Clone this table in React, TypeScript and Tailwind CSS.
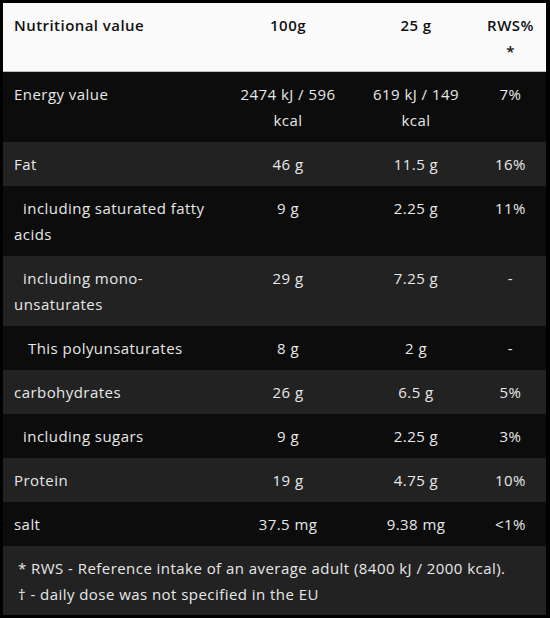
import React from "react";

type Row = { name: string; indent?: number; a: React.ReactNode; b: React.ReactNode; c: string; light: boolean };

const rows: Row[] = [
  { name: "Energy value", a: "2474 kJ / 596 kcal", b: "619 kJ / 149 kcal", c: "7%", light: false },
  { name: "Fat", a: "46 g", b: "11.5 g", c: "16%", light: true },
  { name: "including saturated fatty acids", indent: 9, a: "9 g", b: "2.25 g", c: "11%", light: false },
  { name: "including mono-unsaturates", indent: 9, a: "29 g", b: "7.25 g", c: "-", light: true },
  { name: "This polyunsaturates", indent: 14, a: "8 g", b: "2 g", c: "-", light: false },
  { name: "carbohydrates", a: "26 g", b: "6.5 g", c: "5%", light: true },
  { name: "including sugars", indent: 9, a: "9 g", b: "2.25 g", c: "3%", light: false },
  { name: "Protein", a: "19 g", b: "4.75 g", c: "10%", light: true },
  { name: "salt", a: "37.5 mg", b: "9.38 mg", c: "<1%", light: false },
];

export default function App() {
  return (
    <div
      className="w-[550px] h-[618px] bg-black pt-[3px] pl-[3px] pr-[4px] pb-[3px] text-[15px] leading-[26px] tracking-[0.45px]"
      style={{ fontFamily: '"Open Sans", "Noto Sans", sans-serif' }}
    >
      <div className="w-[543px]">
        <div className="grid grid-cols-[216px_138px_118px_71px] bg-[#fafafa] text-[#111] font-semibold border-b border-[#bdbdbd] h-[69px]">
          <div className="pl-[11px] pr-[10px] py-[9px]">Nutritional value</div>
          <div className="px-[10px] py-[9px] text-center">100g</div>
          <div className="px-[10px] py-[9px] text-center">25 g</div>
          <div className="px-[8px] py-[9px] text-center">RWS% *</div>
        </div>
        {rows.map((r, i) => (
          <div
            key={i}
            className={`grid grid-cols-[216px_138px_118px_71px] text-[#e8e8e8] ${r.light ? "bg-[#222222]" : "bg-[#0c0c0c]"}`}
          >
            <div className="pl-[11px] pr-[10px] py-[9px]">
              {r.indent ? <span className="inline-block" style={{ width: r.indent }} /> : null}
              {r.name}
            </div>
            <div className="px-[10px] py-[9px] text-center">{r.a}</div>
            <div className="px-[10px] py-[9px] text-center">{r.b}</div>
            <div className="px-[8px] py-[9px] text-center">{r.c}</div>
          </div>
        ))}
        <div className="bg-[#222222] text-[#e8e8e8] pl-[15px] pr-[6px] py-[9px] h-[69px]">
          <div>* RWS - Reference intake of an average adult (8400 kJ / 2000 kcal).</div>
          <div>† - daily dose was not specified in the EU</div>
        </div>
      </div>
    </div>
  );
}
